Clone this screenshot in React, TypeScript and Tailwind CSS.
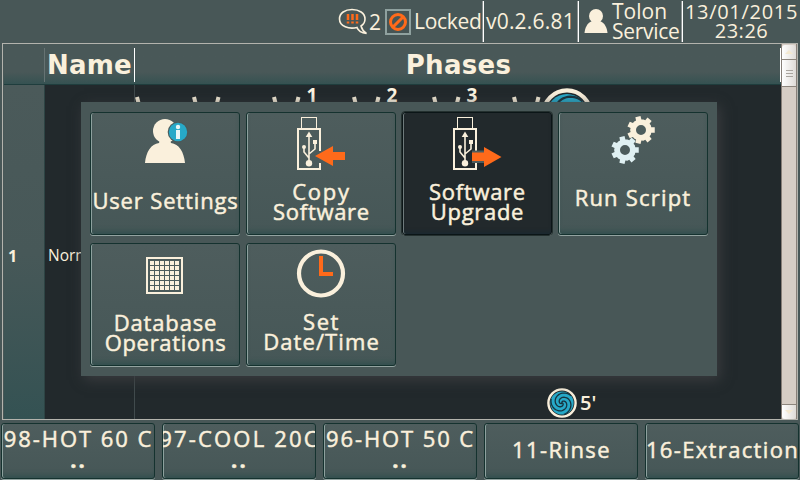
import React from "react";

const CREAM = "#faf0dc";
const ORANGE = "#ff6a1a";
const CYAN = "#27a9c8";
const SANS = "font-['Open_Sans','Noto_Sans',sans-serif]";

function UserSettingsIcon() {
  return (
    <svg width="60" height="56" viewBox="0 0 60 56">
      <ellipse cx="30" cy="16" rx="12" ry="12" fill={CREAM} />
      <path d="M25 25h10l1 3c8 1 13 9 14 20H10c1-11 6-19 14-20z" fill={CREAM} />
      <circle cx="43" cy="17" r="10.3" fill="#4b5a5a" />
      <circle cx="43" cy="17" r="9.2" fill={CYAN} />
      <circle cx="43" cy="12" r="2.2" fill="#e8f6f6" />
      <rect x="41" y="15" width="4" height="9" fill="#e8f6f6" />
    </svg>
  );
}

function UsbIcon({ out = false }: { out?: boolean }) {
  return (
    <svg width="60" height="56" viewBox="0 0 60 56">
      <rect x="10.5" y="2.5" width="15" height="11" fill="none" stroke={CREAM} />
      <path d="M29 36V14H7v40h22v-6" fill="none" stroke={CREAM} strokeWidth="2" />
      <circle cx="18" cy="48.3" r="3.2" fill={CREAM} />
      <path d="M18 48V20M18 43l-5-6v-5M18 39l6-5v-7" fill="none" stroke={CREAM} strokeWidth="1.6" />
      <path d="M18 16.5l3.3 5.5h-6.6z" fill={CREAM} />
      <circle cx="13" cy="32" r="2" fill={CREAM} />
      <rect x="22" y="25" width="4" height="4" fill={CREAM} />
      {out ? (
        <>
          <rect x="25" y="35.5" width="12" height="12.5" fill="#4d5c5d" />
          <path d="M25 37.5h12v-5.5L54.5 42 37 52v-6H25z" fill={ORANGE} />
        </>
      ) : (
        <path d="M24 41L42 31v6h12v8H42v6z" fill={ORANGE} />
      )}
    </svg>
  );
}

function gearPath(cx: number, cy: number) {
  const points: string[] = [];
  const at = (r: number, a: number) => `${(cx + r * Math.cos(a)).toFixed(2)} ${(cy + r * Math.sin(a)).toFixed(2)}`;
  for (let i = 0; i < 7; i++) {
    const a = (i * 2 * Math.PI) / 7;
    points.push(at(10.6, a - 0.26), at(14, a - 0.19), at(14, a + 0.19), at(10.6, a + 0.26), at(10.9, a + 0.45));
  }
  return `M${points.join("L")}ZM${cx + 5} ${cy}a5 5 0 1 0 -10 0a5 5 0 1 0 10 0Z`;
}

function GearsIcon() {
  return (
    <svg width="60" height="56" viewBox="0 0 60 56">
      <path d={gearPath(38, 15)} fill={CREAM} fillRule="evenodd" />
      <path d={gearPath(22, 35)} fill="#dff0f2" fillRule="evenodd" />
    </svg>
  );
}

function DatabaseIcon() {
  const cells = [0, 1, 2, 3, 4, 5];
  return (
    <svg width="60" height="56" viewBox="0 0 60 56">
      <rect x="12" y="12" width="35" height="35" fill="none" stroke={CREAM} strokeWidth="2" />
      {cells.map((r) => cells.map((c) => <rect key={`${r}${c}`} x={15 + c * 5} y={15 + r * 5} width="4" height="4" fill={CREAM} />))}
    </svg>
  );
}

function ClockIcon() {
  return (
    <svg width="60" height="56" viewBox="0 0 60 56">
      <circle cx="30" cy="27.5" r="22" fill="none" stroke={CREAM} strokeWidth="4.2" />
      <path d="M28 10h4v16h10v4H28z" fill={ORANGE} />
    </svg>
  );
}

function spiralArm(turn: number, radius: number) {
  const points: string[] = [];
  for (let i = 0; i <= 40; i++) {
    const t = i / 40;
    const a = turn + t * 5.6;
    points.push(`${(Math.cos(a) * radius * t).toFixed(2)} ${(Math.sin(a) * radius * t).toFixed(2)}`);
  }
  return `M${points.join("L")}`;
}

function SpinIcon({ size }: { size: number }) {
  return (
    <svg width={size} height={size} viewBox="-15 -15 30 30">
      <circle r="13.6" fill="#20282b" stroke={CREAM} strokeWidth="2.4" />
      <circle r="11.6" fill={CYAN} />
      {[0, 1, 2].map((i) => (
        <path key={i} d={spiralArm((i * 2 * Math.PI) / 3, 11.6)} fill="none" stroke="#17343f" strokeWidth="1.3" />
      ))}
    </svg>
  );
}

const FACE =
  "relative flex border rounded-[3px] text-[#faf0dc] font-medium [-webkit-text-stroke:0.5px_#faf0dc]";
const FACE_IDLE =
  "border-[#15322f] bg-linear-to-b from-[#4e5d5d] to-[#465757] shadow-[inset_1px_0_0_#8da19e,inset_0_-5px_5px_-2px_#34504f,0_1px_0_#93a3a0]";
const FACE_ACTIVE =
  "border-[#0b1517] bg-[#22292c] outline-1 outline-[#24302f] shadow-[inset_1px_0_0_#6f7b7c,inset_0_-4px_4px_-2px_#1a2930,0_1px_0_#93a3a0]";

type Tile = { lines: [string, string][]; icon: React.ReactNode; active?: boolean; pad: string };

const tiles: Tile[] = [
  { lines: [["User Settings", "tracking-[0.85px]"]], icon: <UserSettingsIcon />, pad: "pt-[19px] pl-px" },
  { lines: [["Copy", "tracking-[1.7px]"], ["Software", "tracking-[0.7px]"]], icon: <UsbIcon />, pad: "pt-[10px] pl-px" },
  { lines: [["Software", "tracking-[0.7px]"], ["Upgrade", "tracking-[0.7px]"]], icon: <UsbIcon out />, active: true, pad: "pt-[10px] pl-px" },
  { lines: [["Run Script", "tracking-[1.2px]"]], icon: <GearsIcon />, pad: "pt-[16px]" },
  { lines: [["Database", "tracking-[0.85px]"], ["Operations", "tracking-[0.7px]"]], icon: <DatabaseIcon />, pad: "pt-[10px] pl-px" },
  { lines: [["Set", "tracking-[1.5px]"], ["Date/Time", "tracking-[1.1px]"]], icon: <ClockIcon />, pad: "pt-[9px] pl-px" },
];

function MenuTile({ tile }: { tile: Tile }) {
  return (
    <button className={`${FACE} ${tile.active ? FACE_ACTIVE : FACE_IDLE} h-[123px] w-[150px] flex-col items-center pt-[2px]`}>
      {tile.icon}
      <span className={`flex flex-col items-center whitespace-nowrap text-[22px] leading-[20px] ${tile.pad}`}>
        {tile.lines.map(([text, tracking]) => (
          <span key={text} className={tracking}>{text}</span>
        ))}
      </span>
    </button>
  );
}

const programs: [string, string, string][] = [
  ["98-HOT 60 C", "..", "tracking-[1.95px]"],
  ["97-COOL 20C", "..", "tracking-[2.2px]"],
  ["96-HOT 50 C", "..", "tracking-[1.9px]"],
  ["11-Rinse", "", "tracking-[1.4px]"],
  ["16-Extraction", "", "tracking-[1.35px]"],
];

function Divider() {
  return <div className="mt-px h-[41px] w-[2px] shrink-0 border-r border-white bg-[#8b9292]" />;
}

function StatusBar() {
  return (
    <header className="flex h-[43px] text-[21px] leading-[20px] text-[#faf0dc]">
      <div className="flex w-[482px] items-center pl-[338px]">
        <svg width="30" height="28" viewBox="0 0 30 28" fill="none" className="shrink-0">
          <path d="M19 19.500c-8 2-17.500-1-17.500-8.500 0-6 5.500-9.500 12.500-9.500s13 3.500 13 9.500c0 3-1.500 5.500-4 7 1 3.500 3 6 5.500 7.500-4.500-.5-8-2-9.500-6z" stroke={CREAM} strokeWidth="1.6" />
          <path d="M10 6v6M14.500 6v6M19 6v6M10 13.500v2M14.500 13.500v2M19 13.500v2" stroke={ORANGE} strokeWidth="2.500" />
        </svg>
        <span className="w-[17px] pl-px">2</span>
        <svg width="26" height="26" viewBox="0 0 26 26" fill="none" className="shrink-0">
          <rect x="1" y="1" width="24" height="24" fill="#465555" stroke="#8fa19f" strokeWidth="2" />
          <circle cx="13" cy="13" r="7.500" stroke={ORANGE} strokeWidth="3" />
          <path d="M8 18L18 8" stroke={ORANGE} strokeWidth="3" />
        </svg>
        <span className="pb-px pl-[3px] tracking-[-0.3px]">Locked</span>
      </div>
      <Divider />
      <div className="flex w-[93px] items-center pb-px pl-[2px] tracking-[0.2px]">v0.2.6.81</div>
      <Divider />
      <div className="flex w-[102px] items-center pl-[5px]">
        <svg width="24" height="28" viewBox="0 0 24 28" className="shrink-0">
          <circle cx="12" cy="8" r="7" fill={CREAM} />
          <path d="M8 13h8c5 2 7 7 7.500 12H.5C1 20 3 15 8 13z" fill={CREAM} />
        </svg>
        <div className="pb-px pl-[4px]">
          <div>Tolon</div>
          <div className="tracking-[-0.3px]">Service</div>
        </div>
      </div>
      <Divider />
      <div className="flex flex-1 flex-col justify-center pb-px text-center text-[20px] leading-[19px]">
        <div className="tracking-[0.7px]">13/01/2015</div>
        <div className="tracking-[0.5px]">23:26</div>
      </div>
    </header>
  );
}

function PhaseCell({ label }: { label: string }) {
  return (
    <div className="flex h-[18px] w-[80px] shrink-0">
      <svg width="60" height="18" viewBox="0 0 60 18" className="shrink-0">
        <path d="M28 12l1.500 6M52.500 12l-1.500 6" stroke="#efe6d2" strokeWidth="4" />
      </svg>
      <span className="w-[12px] text-center text-[19px] leading-[20px] font-bold text-[#fdf5e2]">{label}</span>
    </div>
  );
}

function ScrollBar() {
  return (
    <div className="flex w-[16px] shrink-0 flex-col border-x border-[#877f78] bg-[#d6cdc5] pt-px">
      <div className="flex h-[15px] items-center justify-center rounded-t-[3px] border-b border-[#8c857d] bg-linear-to-r from-white to-[#dfdbd7]">
        <svg width="8" height="4"><path d="M0 4l4-4 4 4z" fill="#f3e8d0" /></svg>
      </div>
      <div className="flex h-[27px] flex-col items-center justify-center gap-[2px] border-b border-[#8c857d] bg-linear-to-r from-white to-[#dfdbd7]">
        <i className="h-px w-[7px] bg-[#aaa59f]" />
        <i className="h-px w-[7px] bg-[#aaa59f]" />
        <i className="h-px w-[7px] bg-[#aaa59f]" />
      </div>
      <div className="flex-1" />
      <div className="flex h-[15px] items-center justify-center rounded-b-[3px] border-t border-[#8c857d] bg-linear-to-r from-white to-[#dfdbd7]">
        <svg width="8" height="4"><path d="M0 0l4 4 4-4z" fill="#f3e8d0" /></svg>
      </div>
    </div>
  );
}

function ProgramTable() {
  return (
    <main className="mx-[2px] flex h-[377px] border border-[#b3b3ad] pl-px">
      <div className="flex min-w-0 flex-1 flex-col">
        <div className="flex h-[41px] border-b border-[#1f3d3d] bg-linear-to-b from-[#495858] from-70% to-[#355252] font-['DejaVu_Sans',sans-serif] text-[26px] font-bold text-[#faf0dc]">
          <div className="mt-[4px] h-[34px] w-[41px] border-r border-[#667373]" />
          <div className="mt-[4px] h-[34px] w-[90px] border-r border-white pl-[2px] leading-[34px] tracking-[0.2px]">Name</div>
          <div className="mt-[4px] h-[34px] flex-1 border-r border-white pl-[2px] text-center leading-[34px] tracking-[0.3px]">Phases</div>
        </div>
        <div className="flex flex-1 bg-[#22292c]">
          <div className="flex w-[41px] items-center border-r border-[#2d4444] bg-linear-to-b from-[#4b5a5a] via-[#475858] to-[#345253] pt-[7px] pl-[4px] text-[16px] font-bold text-[#faf0dc]">1</div>
          <div className="flex w-[90px] items-center border-r border-[#414b4d] pt-[7px] pl-[3px] text-[15.5px] text-[#faf0dc]">Normal</div>
          <div className="flex flex-1 flex-col justify-between overflow-hidden">
            <div className="flex h-[50px]">
              <div className="w-[31px] shrink-0">
                <svg width="31" height="18"><path d="M2 12l1.500 6" stroke="#efe6d2" strokeWidth="4" /></svg>
              </div>
              {["", "1", "2", "3", ""].map((label, i) => (
                <PhaseCell key={i} label={label} />
              ))}
              <div className="-ml-[25px] mt-[3px]">
                <SpinIcon size={52} />
              </div>
            </div>
            <div className="flex items-center pb-px pl-[412px] text-[20px] leading-[30px] font-semibold text-[#faf0dc]">
              <SpinIcon size={30} />
              <span className="-mt-px pl-[3px]">5'</span>
            </div>
          </div>
        </div>
      </div>
      <ScrollBar />
    </main>
  );
}

export default function App() {
  return (
    <div className={`relative h-[480px] w-[800px] overflow-hidden bg-[#485757] ${SANS}`}>
      <StatusBar />
      <ProgramTable />
      <footer className="flex gap-[7px] pt-[3px] pl-px">
        {programs.map(([name, more, tracking]) => (
          <button key={name} className={`${FACE} ${FACE_IDLE} h-[56px] w-[154px] shrink-0 flex-col items-center justify-center overflow-hidden pb-[4px] pl-px text-[22px] leading-[24px] whitespace-nowrap`}>
            <span className={`${tracking} ${more ? "pt-px" : ""}`}>{name}</span>
            {more && <span className={`${tracking} -mt-[3px] pb-[3px] font-bold`}>{more}</span>}
          </button>
        ))}
      </footer>
      <div className="absolute top-[102px] left-[81px] grid h-[274px] w-[636px] grid-cols-[repeat(4,150px)] content-start gap-x-[6px] gap-y-[8px] bg-[#485757] pt-[10px] pl-[9px] shadow-[3px_4px_12px_0_#3a3c3f]">
        {tiles.map((tile, i) => (
          <MenuTile key={i} tile={tile} />
        ))}
      </div>
    </div>
  );
}
